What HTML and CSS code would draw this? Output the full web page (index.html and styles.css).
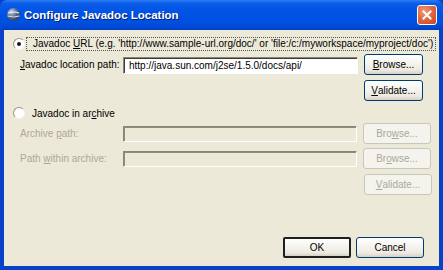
FILE: index.html
```html
<!doctype html>
<html lang="en">
<head>
    <title>Configure Javadoc Location</title>
    <link rel="stylesheet" href="styles.css">
</head>
<body>

    <div class="window">

        <div class="titlebar">
            <svg class="appIcon" width="15" height="15" viewBox="0 0 15 15">
                <defs>
                    <radialGradient id="globe" cx="0.35" cy="0.3" r="0.8">
                        <stop offset="0" stop-color="#c8d4e6"/>
                        <stop offset="0.5" stop-color="#5a6f92"/>
                        <stop offset="1" stop-color="#243252"/>
                    </radialGradient>
                </defs>
                <circle cx="7.5" cy="7.5" r="6.5" fill="url(#globe)"/>
                <path d="M2 6 Q7.5 4 13 6" stroke="#eef2f8" stroke-width="1.2" fill="none"/>
                <path d="M1.5 9 Q7.5 11 13.5 9" stroke="#d6deea" stroke-width="1" fill="none"/>
            </svg>
            <span class="title">Configure Javadoc Location</span>
            <div class="closeBtn">
                <svg width="10" height="10" viewBox="0 0 10 10">
                    <path d="M1.5 1.5 L8.5 8.5 M8.5 1.5 L1.5 8.5" stroke="#fff" stroke-width="2" stroke-linecap="square"/>
                </svg>
            </div>
        </div>

        <div class="client">

            <div class="radioRow rowUrl">
                <span class="radio checked"></span>
                <span class="focusLabel">Javadoc <u>U</u>RL (e.g. 'http://www.sample-url.org/doc/' or 'file:/c:/myworkspace/myproject/doc')</span>
            </div>

            <div class="fieldRow rowLocation">
                <span class="fieldLabel"><u>J</u>avadoc location path:</span>
                <span class="textBox">http://java.sun.com/j2se/1.5.0/docs/api/</span>
                <span class="btn"><u>B</u>rowse...</span>
            </div>

            <div class="fieldRow rowValidate">
                <span class="btn"><u>V</u>alidate...</span>
            </div>

            <div class="radioRow rowArchive">
                <span class="radio"></span>
                <span class="radioLabel">Javadoc in ar<u>c</u>hive</span>
            </div>

            <div class="fieldRow rowArchivePath">
                <span class="fieldLabel disabled">Archive <u>p</u>ath:</span>
                <span class="textBox off"></span>
                <span class="btn wide off">Bro<u>w</u>se...</span>
            </div>

            <div class="fieldRow rowInner">
                <span class="fieldLabel disabled">Path <u>w</u>ithin archive:</span>
                <span class="textBox off"></span>
                <span class="btn wide off">Br<u>o</u>wse...</span>
            </div>

            <div class="fieldRow rowValidate2">
                <span class="btn wide off"><u>V</u>alidate...</span>
            </div>

            <div class="footer">
                <span class="btn dlg default">OK</span>
                <span class="btn dlg">Cancel</span>
            </div>

        </div>
    </div>

</body>
</html>
```

FILE: styles.css
```css
* {
    box-sizing: border-box;
}

body {
    margin: 0;
    font: normal 10px "Liberation Sans", Arial, sans-serif;
    color: #000;
    background: #fff;
}

u {
    text-decoration: underline;
}

.window {
    width: 443px;
    height: 270px;
    display: flex;
    flex-direction: column;
    background: #0842c8;
    overflow: hidden;
}

/* title bar */

.titlebar {
    height: 30px;
    display: flex;
    align-items: center;
    padding: 0 5px 1px 6px;
    background: linear-gradient(to bottom, #2a7cf4 0%, #0a5ce8 12%, #0053e4 40%, #0050e0 75%, #0047d2 92%, #003ebf 100%);
    border-radius: 7px 7px 0 0;
}

.appIcon {
    flex: none;
}

.title {
    margin-left: 3px;
    font: bold 11.5px "Liberation Sans", Arial, sans-serif;
    color: #fff;
    text-shadow: 1px 1px 0 #0a1e6e;
    flex: 1;
    white-space: nowrap;
}

.closeBtn {
    width: 20px;
    height: 20px;
    margin-right: 1px;
    border: 1px solid #fff;
    border-radius: 3px;
    display: flex;
    align-items: center;
    justify-content: center;
    background: radial-gradient(circle at 35% 30%, #f09a78 0%, #e06a44 45%, #c8431f 100%);
}

/* client area */

.client {
    flex: 1;
    margin: 0 4px 4px 4px;
    background: #ece9d8;
    display: flex;
    flex-direction: column;
}

.radioRow {
    height: 14px;
    display: flex;
    align-items: center;
    white-space: nowrap;
}

.rowUrl {
    margin-top: 7px;
}

.rowArchive {
    margin-top: 5px;
}

.radio {
    width: 12px;
    height: 12px;
    margin-left: 9px;
    border-radius: 50%;
    border: 1px solid;
    border-color: #9a978a #f6f5ef #f6f5ef #9a978a;
    background: #fff;
    position: relative;
    flex: none;
}

.radio.checked::after {
    content: "";
    position: absolute;
    left: 3px;
    top: 3px;
    width: 4px;
    height: 4px;
    border-radius: 50%;
    background: #1a1a1a;
}

.focusLabel {
    margin-left: 1px;
    padding: 0 2px 0 6px;
    height: 14px;
    line-height: 12px;
    border: 1px dotted #555;
}

.radioLabel {
    margin-left: 7px;
}

.fieldRow {
    height: 21px;
    display: flex;
    align-items: center;
    padding-left: 16px;
    white-space: nowrap;
}

.rowLocation {
    margin-top: 3px;
}

.rowValidate {
    margin-top: 5px;
    padding-left: 360px;
}

.rowArchivePath {
    margin-top: 3px;
}

.rowInner {
    margin-top: 4px;
}

.rowValidate2 {
    margin-top: 5px;
    padding-left: 360px;
}

.fieldLabel {
    width: 103px;
    flex: none;
}

.disabled {
    color: #aca899;
}

.textBox {
    width: 235px;
    height: 17px;
    margin-top: 1px;
    padding: 1px 0 0 5px;
    line-height: 13px;
    background: #fff;
    border: 1px solid;
    border-color: #898678 #fff #fff #898678;
    box-shadow: inset 1px 1px 0 #3d3c36;
}

.textBox.off {
    width: 234px;
    height: 16px;
    background: #ece9d8;
    box-shadow: inset 1px 1px 0 #8f8c7f;
}

.btn {
    width: 59px;
    height: 21px;
    margin-left: 6px;
    border: 1px solid #003c74;
    border-radius: 3px;
    background: linear-gradient(to bottom, #ffffff 0%, #f6f5f0 40%, #ece9df 80%, #d6d0c5 100%);
    display: flex;
    align-items: center;
    justify-content: center;
    flex: none;
}

.rowValidate .btn,
.rowValidate2 .btn {
    margin-left: 0;
}

.btn.wide {
    width: 68px;
}

.btn.off {
    color: #aca899;
    border-color: #c9c7ba;
    background: #f4f3ee;
}

.footer {
    margin-top: auto;
    margin-bottom: 8px;
    padding-right: 15px;
    display: flex;
    justify-content: flex-end;
    gap: 5px;
}

.btn.dlg {
    width: 68px;
    margin-left: 0;
}

.btn.default {
    border: 2px solid #1f1f1f;
    border-radius: 2px;
}
```
